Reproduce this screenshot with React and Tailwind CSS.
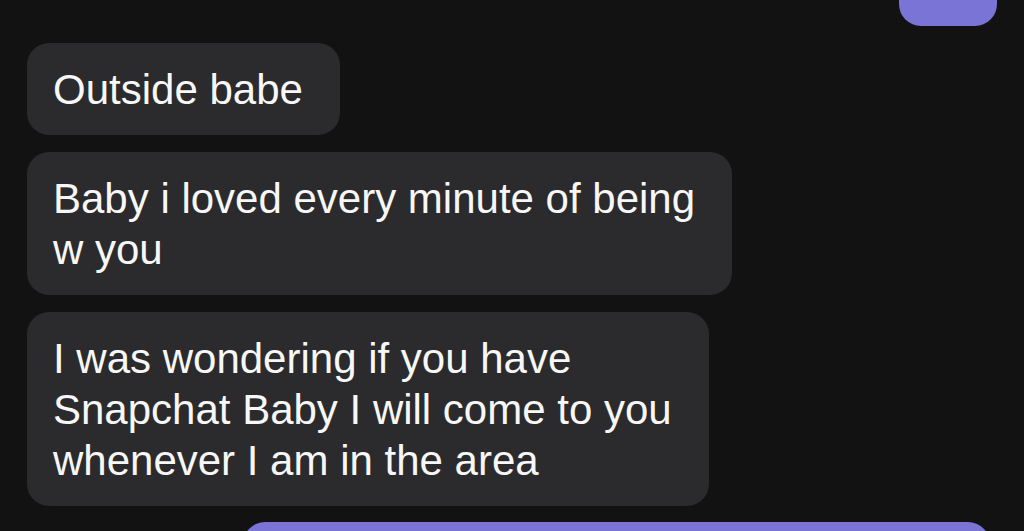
import React from "react";

const messages = [
  ["Outside babe"],
  ["Baby i loved every minute of being", "w you"],
  ["I was wondering if you have", "Snapchat Baby I will come to you", "whenever I am in the area"],
];

const Bubble = ({ lines }) => (
  <div className="w-fit rounded-[22px] bg-[#2b2b2d] pt-[21px] pb-[20px] pl-[26px] pr-[37px] text-[42px] leading-[51px] text-[#f7f7f7]">
    {lines.map((l, i) => (
      <div key={i} className="whitespace-nowrap">{l}</div>
    ))}
  </div>
);

export default function App() {
  return (
    <div
      className="h-[531px] w-[1024px] overflow-hidden bg-[#121212]"
      style={{ fontFamily: "'Liberation Sans', Arial, sans-serif" }}
    >
      <div className="flex flex-col gap-[17px] pl-[27px]">
        {/* sent bubble, top cut off */}
        <div className="-mt-[54px] mr-[27px] h-[80px] w-[98px] self-end rounded-[22px] bg-[#7b74d7]" />
        {messages.map((m, i) => (
          <Bubble key={i} lines={m} />
        ))}
        {/* sent bubble at bottom */}
        <div className="-mt-px ml-[216px] mr-[34px] h-[80px] rounded-[22px] bg-[#7b74d7]" />
      </div>
    </div>
  );
}
